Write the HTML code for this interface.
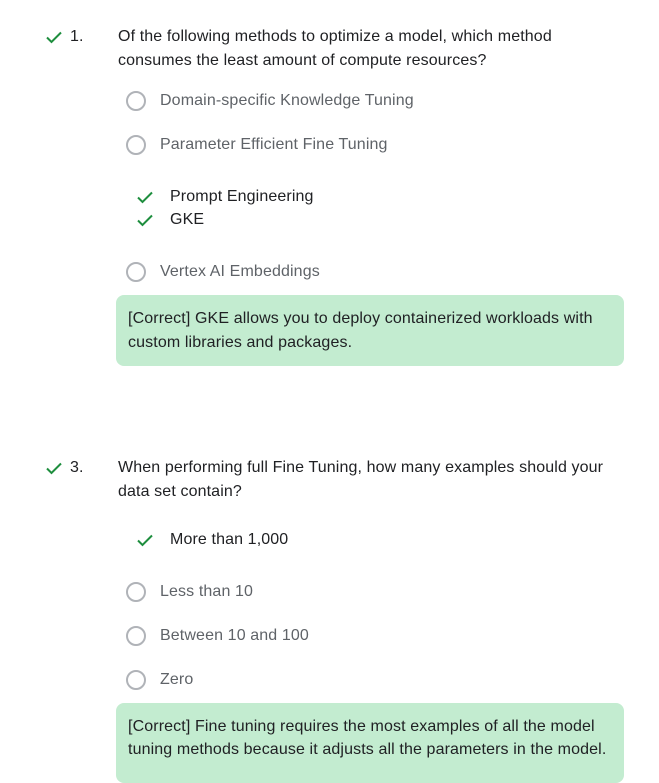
<!DOCTYPE html>
<html><head><style>
body{margin:0;width:659px;height:771px;background:#fff;font-family:"Liberation Sans",Arial,sans-serif;font-size:16px;letter-spacing:0.12px;position:relative;overflow:hidden;color:#202124}
.a{position:absolute;line-height:20px;white-space:nowrap}
.q{color:#202124}
.o{color:#5f6368}
.r{position:absolute;width:20px;height:20px;border:2px solid #b0b3b8;border-radius:50%;box-sizing:border-box}
.box{position:absolute;left:116px;width:508px;background:#c3ecd0;border-radius:8px}
svg{position:absolute}
</style></head><body>
<svg style="left:45px;top:29px" width="18" height="16" viewBox="0 0 18 16"><path d="M2 8.5l4.5 4.5L16 3.5" fill="none" stroke="#1e8e3e" stroke-width="2"/></svg>
<div class="a q" style="left:70px;top:27px">1.</div>
<div class="a q" style="left:118px;top:27px">Of the following methods to optimize a model, which method</div>
<div class="a q" style="left:118px;top:51px">consumes the least amount of compute resources?</div>
<div class="r" style="left:126px;top:91px"></div>
<div class="a o" style="left:160px;top:91px">Domain-specific Knowledge Tuning</div>
<div class="r" style="left:126px;top:135px"></div>
<div class="a o" style="left:160px;top:135px">Parameter Efficient Fine Tuning</div>
<svg style="left:136px;top:189px" width="18" height="16" viewBox="0 0 18 16"><path d="M2 8.5l4.5 4.5L16 3.5" fill="none" stroke="#1e8e3e" stroke-width="2"/></svg>
<div class="a q" style="left:170px;top:187px">Prompt Engineering</div>
<svg style="left:136px;top:212px" width="18" height="16" viewBox="0 0 18 16"><path d="M2 8.5l4.5 4.5L16 3.5" fill="none" stroke="#1e8e3e" stroke-width="2"/></svg>
<div class="a q" style="left:170px;top:210px">GKE</div>
<div class="r" style="left:126px;top:262px"></div>
<div class="a o" style="left:160px;top:262px">Vertex AI Embeddings</div>
<div class="box" style="top:295px;height:71px"></div>
<div class="a q" style="left:128px;top:309px">[Correct] GKE allows you to deploy containerized workloads with</div>
<div class="a q" style="left:128px;top:333px">custom libraries and packages.</div>

<svg style="left:45px;top:460px" width="18" height="16" viewBox="0 0 18 16"><path d="M2 8.5l4.5 4.5L16 3.5" fill="none" stroke="#1e8e3e" stroke-width="2"/></svg>
<div class="a q" style="left:70px;top:458px">3.</div>
<div class="a q" style="left:118px;top:458px">When performing full Fine Tuning, how many examples should your</div>
<div class="a q" style="left:118px;top:482px">data set contain?</div>
<svg style="left:136px;top:532px" width="18" height="16" viewBox="0 0 18 16"><path d="M2 8.5l4.5 4.5L16 3.5" fill="none" stroke="#1e8e3e" stroke-width="2"/></svg>
<div class="a q" style="left:170px;top:530px">More than 1,000</div>
<div class="r" style="left:126px;top:582px"></div>
<div class="a o" style="left:160px;top:582px">Less than 10</div>
<div class="r" style="left:126px;top:626px"></div>
<div class="a o" style="left:160px;top:626px">Between 10 and 100</div>
<div class="r" style="left:126px;top:670px"></div>
<div class="a o" style="left:160px;top:670px">Zero</div>
<div class="box" style="top:703px;height:80px"></div>
<div class="a q" style="left:128px;top:717px">[Correct] Fine tuning requires the most examples of all the model</div>
<div class="a q" style="left:128px;top:740px">tuning methods because it adjusts all the parameters in the model.</div>
</body></html>
